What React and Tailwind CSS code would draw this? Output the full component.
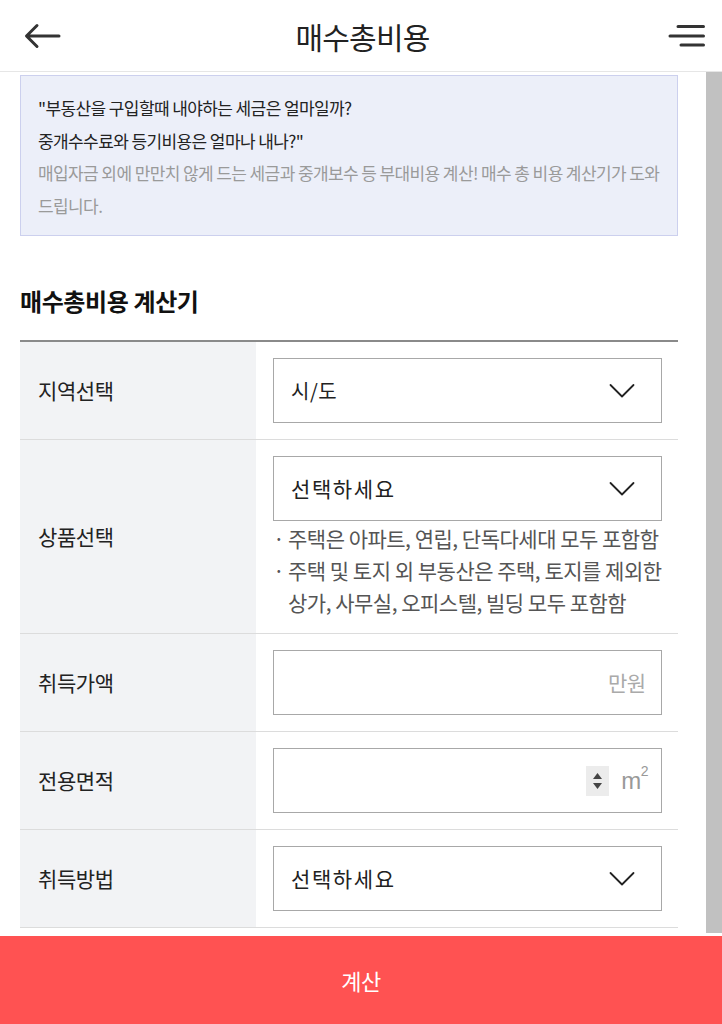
import React from "react";

function Chevron() {
  return (
    <svg width="26" height="16" viewBox="0 0 26 16" fill="none" className="shrink-0">
      <path d="M1.5 2 L13 13.5 L24.5 2" stroke="#222" strokeWidth="1.8" strokeLinecap="round" strokeLinejoin="round" />
    </svg>
  );
}

function SelectBox({ text, spaced }) {
  return (
    <div className="h-[65px] border border-[#a8a8a8] bg-white flex items-center justify-between pl-[17px] pr-[26px]">
      <span className={`text-[20px] text-[#222] leading-none ${spaced ? "text-[21px] tracking-[1.6px]" : "tracking-[0.5px]"}`}>{text}</span>
      <Chevron />
    </div>
  );
}

function Row({ label, children, tall }) {
  return (
    <div className="flex border-b border-[#dcdcdc]">
      <div className="w-[236px] shrink-0 bg-[#f2f3f5] flex items-center pl-[18px]">
        <span className="text-[21px] tracking-[-0.4px] text-[#222]">{label}</span>
      </div>
      <div className={`flex-1 pl-[17px] pr-[16px] ${tall ? "pt-[16px] pb-[15px]" : "pt-[16px] pb-[16px]"}`}>{children}</div>
    </div>
  );
}

export default function App() {
  return (
    <div className="w-[722px] h-[1024px] flex flex-col bg-white overflow-hidden font-['Noto_Sans_CJK_KR','Noto_Sans',sans-serif] text-[#222]">
      <header className="h-[72px] shrink-0 border-b border-[#e6e6e6] flex items-center justify-between pl-[24px] pr-[17px]">
        <div className="w-[90px] flex items-center">
          <svg width="37" height="26" viewBox="0 0 37 26" fill="none">
            <path d="M35 13 H3 M13 2.5 L2.5 13 L13 23.5" stroke="#333" strokeWidth="3" strokeLinecap="round" strokeLinejoin="round" />
          </svg>
        </div>
        <h1 className="text-[30px] tracking-[-0.8px] leading-none text-[#222] mr-[4px]">매수총비용</h1>
        <div className="w-[90px] flex justify-end">
          <svg width="37" height="24" viewBox="0 0 37 24" fill="none">
            <path d="M10 2.5 H35.5 M2 12 H35.5 M13 21 H35.5" stroke="#333" strokeWidth="3" strokeLinecap="round" />
          </svg>
        </div>
      </header>

      <div className="flex h-[864px] shrink-0">
        <div className="flex-1 pl-[20px] pr-[28px] pt-[3px]">
          <div className="border border-[#ccd0ee] bg-[#eceff9] pt-[15px] pb-[12px] pl-[17px] pr-[4px] text-[17px] leading-[34px] tracking-[-0.6px]">
            <p className="text-[#222] whitespace-nowrap">"부동산을 구입할때 내야하는 세금은 얼마일까?</p>
            <p className="text-[#222] whitespace-nowrap leading-[32px]">중개수수료와 등기비용은 얼마나 내나?"</p>
            <p className="text-[#9a9a9a] whitespace-nowrap leading-[32px]">매입자금 외에 만만치 않게 드는 세금과 중개보수 등 부대비용 계산! 매수 총 비용 계산기가 도와</p>
            <p className="text-[#9a9a9a] whitespace-nowrap">드립니다.</p>
          </div>

          <h2 className="mt-[50px] mb-[24px] text-[24px] leading-[30px] font-bold tracking-[-0.4px] text-[#111]">매수총비용 계산기</h2>

          <div className="border-t-2 border-[#8a8a8a]">
            <Row label="지역선택">
              <SelectBox text="시/도" />
            </Row>
            <Row label="상품선택" tall>
              <SelectBox text="선택하세요" spaced />
              <div className="mt-[1px] text-[21px] leading-[32px] tracking-[-0.5px] text-[#555] whitespace-nowrap">
                <div className="flex">
                  <span className="w-[15px] shrink-0">·</span>
                  <span>주택은 아파트, 연립, 단독다세대 모두 포함함</span>
                </div>
                <div className="flex">
                  <span className="w-[15px] shrink-0">·</span>
                  <span>
                    주택 및 토지 외 부동산은 주택, 토지를 제외한
                    <br />
                    상가, 사무실, 오피스텔, 빌딩 모두 포함함
                  </span>
                </div>
              </div>
            </Row>
            <Row label="취득가액">
              <div className="h-[65px] border border-[#a8a8a8] bg-white flex items-center justify-end pr-[15px]">
                <span className="text-[21px] tracking-[-0.5px] text-[#aaa]">만원</span>
              </div>
            </Row>
            <Row label="전용면적">
              <div className="h-[65px] border border-[#a8a8a8] bg-white flex items-center justify-end pr-[12px]">
                <div className="w-[23px] h-[30px] bg-[#ececec] flex flex-col items-center justify-center gap-[4px] mr-[12px]">
                  <svg width="9" height="6" viewBox="0 0 9 6"><path d="M4.5 0 L9 6 H0 Z" fill="#444" /></svg>
                  <svg width="9" height="6" viewBox="0 0 9 6"><path d="M0 0 H9 L4.5 6 Z" fill="#444" /></svg>
                </div>
                <span className="flex items-start text-[#999] font-['Liberation_Sans',sans-serif]">
                  <span className="text-[24px] leading-none tracking-[-0.5px]">m</span>
                  <span className="text-[14px] leading-none -mt-[5px]">2</span>
                </span>
              </div>
            </Row>
            <Row label="취득방법">
              <SelectBox text="선택하세요" spaced />
            </Row>
          </div>
        </div>
        <div className="w-[17px] shrink-0 bg-[#c1c1c1] mb-[3px]" />
      </div>

      <button className="h-[88px] shrink-0 bg-[#ff5252] flex items-center justify-center text-white text-[22px] tracking-[-0.5px]">
        계산
      </button>
    </div>
  );
}
